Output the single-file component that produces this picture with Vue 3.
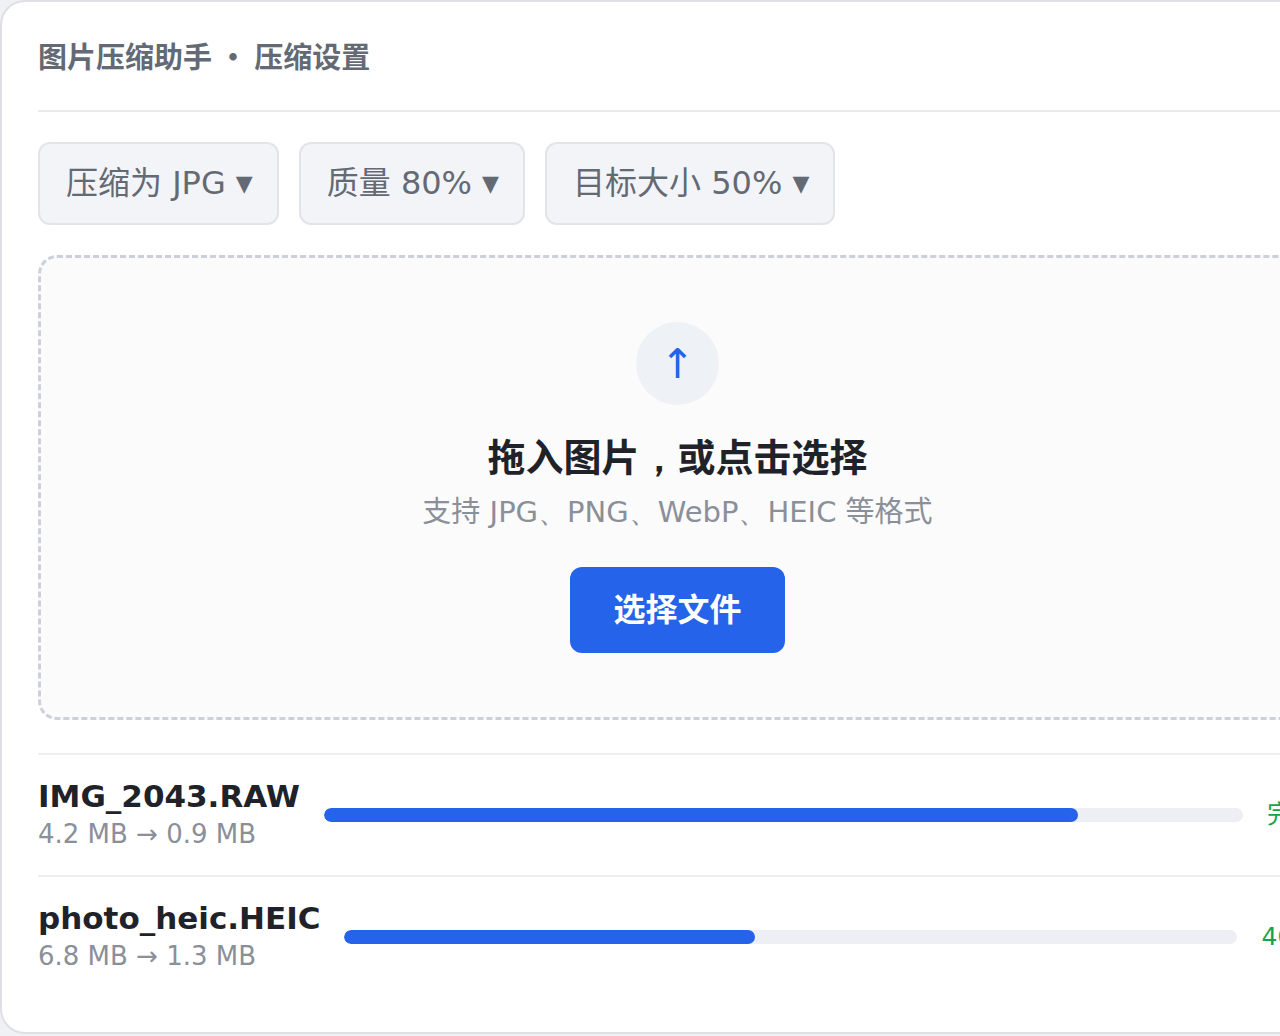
<script setup>
import { ref } from 'vue'

const settings = ref([
  { name: '输出格式', value: '压缩为 JPG', options: ['压缩为 JPG', '压缩为 PNG', '压缩为 WebP'] },
  { name: '质量', value: '质量 80%', options: ['质量 60%', '质量 80%', '质量 90%'] },
  { name: '目标大小', value: '目标大小 50%', options: ['目标大小 30%', '目标大小 50%', '目标大小 70%'] },
])

const files = [
  { name: 'IMG_2043.RAW', size: '4.2 MB → 0.9 MB', progress: 82, status: '完成' },
  { name: 'photo_heic.HEIC', size: '6.8 MB → 1.3 MB', progress: 46, status: '46%' },
]
</script>

<template>
  <div class="viewport">
    <main class="card">
      <h1 class="title">图片压缩助手<span class="dot"> • </span>压缩设置</h1>

      <div class="settings">
        <div v-for="s in settings" :key="s.name" class="chip">
          <select v-model="s.value" :aria-label="s.name">
            <option v-for="o in s.options" :key="o" :value="o">{{ o }}</option>
          </select>
          <span class="caret" aria-hidden="true">▼</span>
        </div>
      </div>

      <section class="drop">
        <div class="badge" aria-hidden="true">↑</div>
        <h2 class="headline">拖入图片<span class="comma">，</span>或点击选择</h2>
        <p class="formats">支持 JPG<span class="comma">、</span>PNG<span class="comma">、</span>WebP<span class="comma">、</span>HEIC 等格式</p>
        <button type="button" class="pick">选择文件</button>
      </section>

      <ul class="files">
        <li v-for="f in files" :key="f.name" class="file">
          <div>
            <div class="name">{{ f.name }}</div>
            <div class="size">{{ f.size }}</div>
          </div>
          <div class="track">
            <div class="fill" :style="{ width: f.progress + '%' }"></div>
          </div>
          <span class="status">{{ f.status }}</span>
        </li>
      </ul>
    </main>
  </div>
</template>

<style>
body {
  background: #f0f1f5;
}
</style>

<style scoped>
.viewport {
  overflow: hidden;
  padding-bottom: 2px;
  font-family: "DejaVu Sans", "Noto Sans CJK SC", sans-serif;
  color: #1f2329;
}
.card {
  box-sizing: border-box;
  margin-right: -75px;
  padding: 36px 36px 35px;
  border: 2px solid #dfe0e6;
  border-radius: 25px;
  background: #fff;
}
.title {
  margin: 0 0 30px;
  padding-bottom: 31px;
  border-bottom: 2px solid #e9eaef;
  font-size: 29px;
  line-height: 41px;
  font-weight: 600;
  color: #646a73;
}
.dot {
  font-family: "Noto Sans CJK SC", sans-serif;
  line-height: 1;
}
.comma {
  font-family: "DejaVu Sans", sans-serif;
  line-height: 1;
}
.settings {
  display: flex;
  gap: 20px;
  margin-bottom: 30px;
}
.chip {
  display: grid;
}
.chip select {
  grid-area: 1 / 1;
  appearance: none;
  field-sizing: content;
  margin: 0;
  padding: 20px 51px 20px 26px;
  border: 2px solid #e3e4e9;
  border-radius: 12px;
  background: #f3f4f7;
  font: inherit;
  font-size: 32px;
  line-height: 39px;
  color: #646a73;
}
.caret {
  grid-area: 1 / 1;
  place-self: center end;
  margin-right: 26px;
  font-size: 22px;
  color: #646a73;
  pointer-events: none;
}
.drop {
  display: flex;
  flex-direction: column;
  align-items: center;
  padding: 64px;
  border: 3px dashed #cdd0da;
  border-radius: 19px;
  background: #fbfbfc;
}
.badge {
  display: flex;
  align-items: center;
  justify-content: center;
  width: 83px;
  height: 83px;
  border-radius: 50%;
  background: #eef1f6;
  font-size: 41px;
  line-height: 48px;
  color: #2563eb;
}
.headline {
  margin: 26px 0 0;
  font-size: 38px;
  line-height: 54px;
  font-weight: 600;
}
.formats {
  margin: 6px 0 0;
  font-size: 29px;
  line-height: 42px;
  color: #8a8f99;
}
.pick {
  margin-top: 34px;
  padding: 20px 43px;
  border: 0;
  border-radius: 12px;
  background: #2563eb;
  font: inherit;
  font-size: 32px;
  line-height: 46px;
  font-weight: 600;
  color: #fff;
}
.files {
  margin: 33px 0 0;
  padding: 0;
  list-style: none;
}
.file {
  display: flex;
  align-items: center;
  gap: 24px;
  padding: 22px 0;
  border-top: 2px solid #eeeff2;
}
.name {
  font-size: 31px;
  line-height: 39px;
  font-weight: 600;
}
.size {
  font-size: 26px;
  line-height: 37px;
  color: #8a8f99;
}
.track {
  flex: 1;
  height: 14px;
  border-radius: 7px;
  background: #eeeff4;
  overflow: hidden;
}
.fill {
  height: 100%;
  border-radius: 7px;
  background: #2563eb;
}
.status {
  font-size: 25px;
  line-height: 36px;
  color: #16a34a;
}
</style>
